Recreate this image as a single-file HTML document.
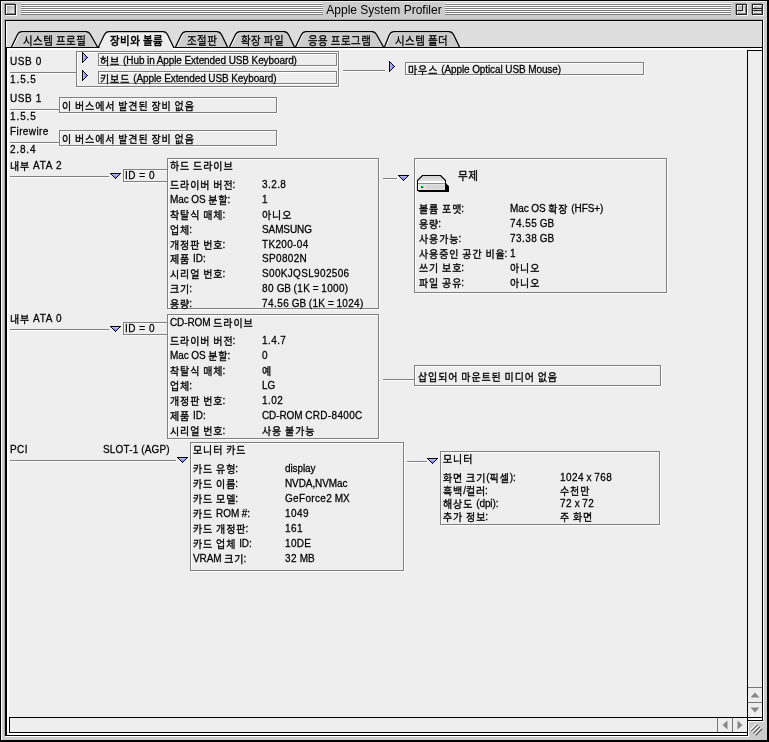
<!DOCTYPE html>
<html lang="ko"><head><meta charset="utf-8"><title>Apple System Profiler</title>
<style>
html,body{margin:0;padding:0;background:#ccc;overflow:hidden}
#w{position:relative;width:769px;height:742px;overflow:hidden;background:#ccc}
.l{position:absolute;display:block}
.t{position:absolute;font:10px/14px "Liberation Sans","Noto Sans CJK KR",sans-serif;white-space:pre;letter-spacing:-.1px;color:#000;transform:scale(1,1.1);transform-origin:0 50%;will-change:transform;-webkit-text-stroke:0.25px #000}
.c{margin-left:-1px}
.k{display:inline-block;transform:scaleY(.91);transform-origin:50% 70%;font-size:10px;letter-spacing:.9px;word-spacing:-.8px;font-weight:400;position:relative;top:1px;-webkit-text-stroke:0.3px #000}
.d{letter-spacing:.42px}
.d2{letter-spacing:.33px}
.tab .k{font-weight:400;-webkit-text-stroke:.25px #000;transform:none;font-size:10.5px;letter-spacing:.45px;top:.6px}
.big .k{transform:scaleY(1.02);font-size:10.6px;letter-spacing:.6px}
.act .k{font-weight:500;-webkit-text-stroke:0.3px #000}
.b{position:absolute;box-sizing:border-box;border:1px solid #808080;background:#eee;box-shadow:1px 1px 0 #fff,inset 1px 1px 0 #fff}
.title{position:absolute;will-change:transform;font:12px/16px "Liberation Sans",sans-serif;text-align:center;color:#000;white-space:nowrap}
.stripes{background:repeating-linear-gradient(to bottom,#fff 0,#fff 1px,#7c7c7c 1px,#7c7c7c 2px)}
.wbox{width:11px;height:11px;box-sizing:border-box;border:1px solid #222;box-shadow:-1px -1px 0 #999,1px 1px 0 #fff;background:linear-gradient(135deg,#999 0%,#ccc 50%,#fff 100%)}
.wbox i{position:absolute;left:0;top:0;width:9px;height:9px;box-sizing:border-box;border-left:1px solid #fff;border-top:1px solid #fff;border-right:1px solid #888;border-bottom:1px solid #888}
.wbox b{position:absolute;box-sizing:border-box}
</style></head><body><div id="w">
<div class="l" style="left:0px;top:0px;width:769px;height:742px;background:#ccc"></div>
<div class="l" style="left:0px;top:0px;width:769px;height:1px;background:#000"></div>
<div class="l" style="left:0px;top:0px;width:1px;height:742px;background:#000"></div>
<div class="l" style="left:767px;top:0px;width:2px;height:742px;background:#000"></div>
<div class="l" style="left:0px;top:740px;width:769px;height:2px;background:#000"></div>
<div class="l" style="left:1px;top:1px;width:766px;height:1px;background:#ececec"></div>
<div class="l" style="left:1px;top:1px;width:1px;height:739px;background:#fff"></div>
<div class="l stripes" style="left:21px;top:3px;width:302px;height:12px"></div>
<div class="l stripes" style="left:445px;top:3px;width:286px;height:12px"></div>
<div class="l wbox" style="left:5px;top:4px"><i></i></div>
<div class="l wbox" style="left:736px;top:4px"><i></i><b style="left:0;top:0;width:6px;height:6px;border-right:1px solid #222;border-bottom:1px solid #222"></b></div>
<div class="l wbox" style="left:752px;top:4px"><i></i><b style="left:0;top:3px;width:9px;height:3px;border-top:1px solid #222;border-bottom:1px solid #222"></b></div>
<div class="title" style="left:318.5px;top:2px;width:130px">Apple System Profiler</div>
<div class="l" style="left:4px;top:19px;width:759px;height:717px;background:#aaa"></div>
<div class="l" style="left:5px;top:20px;width:758px;height:716px;background:#000"></div>
<div class="l" style="left:6px;top:21px;width:756px;height:26px;background:#ddd"></div>
<div class="l" style="left:6px;top:21px;width:756px;height:1px;background:#e8e8e8"></div>
<div class="l" style="left:6px;top:21px;width:1px;height:26px;background:#fff"></div>
<div class="l" style="left:763px;top:20px;width:1px;height:701px;background:#fff"></div>
<div class="l" style="left:7px;top:48px;width:755px;height:687px;background:#fff"></div>
<div class="l" style="left:9px;top:50px;width:753px;height:685px;background:#eee"></div>
<div class="l" style="left:7px;top:733px;width:755px;height:2px;background:#fff"></div>
<div class="l" style="left:748px;top:721px;width:19px;height:19px;background:#ccc"></div>
<div class="l" style="left:763px;top:720px;width:4px;height:1px;background:#ccc"></div>
<div class="l" style="left:748px;top:721px;width:16px;height:1px;background:#fff"></div>
<div class="l" style="left:748px;top:721px;width:1px;height:16px;background:#fff"></div>
<div class="l" style="left:5px;top:736px;width:743px;height:1px;background:#fff"></div>
<div class="l" style="left:5px;top:737px;width:743px;height:3px;background:#ccc"></div>
<svg class="l" style="left:748px;top:721px" width="19" height="19" viewBox="0 0 19 19"><path d="M2.3 9.2 L8.8 2.7 M4.4 11.3 L10.9 4.8 M6.7 13.4 L13.2 6.9" stroke="#fff" stroke-width="1.3" fill="none"/><path d="M3.2 10.1 L9.7 3.6 M5.3 12.2 L11.8 5.7 M7.6 14.3 L14.1 7.8" stroke="#606060" stroke-width="1.3" fill="none"/></svg>
<div class="l" style="left:747px;top:50px;width:16px;height:668px;background:#000"></div>
<div class="l" style="left:748px;top:51px;width:14px;height:666px;background:#eee"></div>
<div class="l" style="left:748px;top:687px;width:14px;height:1px;background:#777"></div>
<div class="l" style="left:748px;top:702px;width:14px;height:1px;background:#777"></div>
<div class="l" style="left:748px;top:718px;width:14px;height:2px;background:#fff"></div>
<div class="l" style="left:747px;top:720px;width:16px;height:1px;background:#000"></div>
<div class="l" style="left:747px;top:717px;width:1px;height:19px;background:#000"></div>
<svg class="l" style="left:750px;top:692px" width="10" height="6" viewBox="0 0 10 6"><path d="M0.5 5.5 L5 0.5 L9.5 5.5 Z" fill="#888"/></svg>
<svg class="l" style="left:750px;top:707px" width="10" height="6" viewBox="0 0 10 6"><path d="M0.5 0.5 L5 5.5 L9.5 0.5 Z" fill="#888"/></svg>
<div class="l" style="left:9px;top:717px;width:739px;height:16px;background:#000"></div>
<div class="l" style="left:10px;top:718px;width:737px;height:14px;background:#eee"></div>
<div class="l" style="left:717px;top:718px;width:1px;height:14px;background:#777"></div>
<div class="l" style="left:732px;top:718px;width:1px;height:14px;background:#777"></div>
<svg class="l" style="left:722px;top:720px" width="6" height="10" viewBox="0 0 6 10"><path d="M5.5 0.5 L0.5 5 L5.5 9.5 Z" fill="#888"/></svg>
<svg class="l" style="left:737px;top:720px" width="6" height="10" viewBox="0 0 6 10"><path d="M0.5 0.5 L5.5 5 L0.5 9.5 Z" fill="#888"/></svg>
<div class="l" style="left:5px;top:47px;width:758px;height:1px;background:#000"></div>
<svg class="l" style="left:0;top:28px" width="480" height="22" viewBox="0 28 480 22"><path d="M11.5 47 L17.5 34.5 Q19 31.5 22 31.5 L86 31.5 Q89 31.5 90.5 34.5 L97.5 47 Z" fill="#ccc" stroke="none"/><path d="M12.7 47 L18.7 34.9 Q19.8 32.5 22.4 32.5 L86 32.5" fill="none" stroke="#fff" stroke-width="1"/><path d="M11.5 47 L17.5 34.5 Q19 31.5 22 31.5 L86 31.5 Q89 31.5 90.5 34.5 L97.5 47" fill="none" stroke="#000" stroke-width="1.25"/><path d="M98.5 47 L104.5 34.5 Q106 31.5 109 31.5 L163 31.5 Q166 31.5 167.5 34.5 L173.5 47 Z" fill="#eee" stroke="none"/><path d="M99.7 47 L105.7 34.9 Q106.8 32.5 109.4 32.5 L163 32.5" fill="none" stroke="#fff" stroke-width="1"/><path d="M98.5 47 L104.5 34.5 Q106 31.5 109 31.5 L163 31.5 Q166 31.5 167.5 34.5 L173.5 47" fill="none" stroke="#000" stroke-width="1.25"/><rect x="99.5" y="47" width="73.5" height="3" fill="#eee"/><path d="M175.5 47 L181.5 34.5 Q183 31.5 186 31.5 L217 31.5 Q220 31.5 221.5 34.5 L227.5 47 Z" fill="#ccc" stroke="none"/><path d="M176.7 47 L182.7 34.9 Q183.8 32.5 186.4 32.5 L217 32.5" fill="none" stroke="#fff" stroke-width="1"/><path d="M175.5 47 L181.5 34.5 Q183 31.5 186 31.5 L217 31.5 Q220 31.5 221.5 34.5 L227.5 47" fill="none" stroke="#000" stroke-width="1.25"/><path d="M229.5 47 L235.5 34.5 Q237 31.5 240 31.5 L284 31.5 Q287 31.5 288.5 34.5 L294.5 47 Z" fill="#ccc" stroke="none"/><path d="M230.7 47 L236.7 34.9 Q237.8 32.5 240.4 32.5 L284 32.5" fill="none" stroke="#fff" stroke-width="1"/><path d="M229.5 47 L235.5 34.5 Q237 31.5 240 31.5 L284 31.5 Q287 31.5 288.5 34.5 L294.5 47" fill="none" stroke="#000" stroke-width="1.25"/><path d="M295.5 47 L301.5 34.5 Q303 31.5 306 31.5 L372 31.5 Q375 31.5 376.5 34.5 L383.5 47 Z" fill="#ccc" stroke="none"/><path d="M296.7 47 L302.7 34.9 Q303.8 32.5 306.4 32.5 L372 32.5" fill="none" stroke="#fff" stroke-width="1"/><path d="M295.5 47 L301.5 34.5 Q303 31.5 306 31.5 L372 31.5 Q375 31.5 376.5 34.5 L383.5 47" fill="none" stroke="#000" stroke-width="1.25"/><path d="M384.5 47 L389.5 34.5 Q391 31.5 394 31.5 L449 31.5 Q452 31.5 453.5 34.5 L459.5 47 Z" fill="#ccc" stroke="none"/><path d="M385.7 47 L390.7 34.9 Q391.8 32.5 394.4 32.5 L449 32.5" fill="none" stroke="#fff" stroke-width="1"/><path d="M384.5 47 L389.5 34.5 Q391 31.5 394 31.5 L449 31.5 Q452 31.5 453.5 34.5 L459.5 47" fill="none" stroke="#000" stroke-width="1.25"/></svg>
<div class="t tab" style="left:23px;top:33px"><span class="k">시스템 </span><span class="k">프로필</span></div>
<div class="t tab act" style="left:110px;top:33px"><span class="k">장비와 </span><span class="k">볼륨</span></div>
<div class="t tab" style="left:187px;top:33px"><span class="k">조절판</span></div>
<div class="t tab" style="left:241px;top:33px"><span class="k">확장 </span><span class="k">파일</span></div>
<div class="t tab" style="left:308px;top:33px"><span class="k">응용 </span><span class="k">프로그램</span></div>
<div class="t tab" style="left:395px;top:33px"><span class="k">시스템 </span><span class="k">폴더</span></div>
<div class="t " style="left:10px;top:54.5px;letter-spacing:0.6px">USB 0</div>
<div class="l" style="left:10px;top:72px;width:66px;height:1px;background:#808080;box-shadow:0 1px 0 #fff"></div>
<div class="t " style="left:10px;top:72.5px;letter-spacing:0.9px">1.5.5</div>
<div class="t " style="left:10px;top:91.5px;letter-spacing:0.6px">USB 1</div>
<div class="l" style="left:10px;top:109px;width:49px;height:1px;background:#808080;box-shadow:0 1px 0 #fff"></div>
<div class="t " style="left:10px;top:109.5px;letter-spacing:0.9px">1.5.5</div>
<div class="t " style="left:10px;top:124.5px;letter-spacing:0.4px">Firewire</div>
<div class="l" style="left:10px;top:142px;width:49px;height:1px;background:#808080;box-shadow:0 1px 0 #fff"></div>
<div class="t " style="left:10px;top:142.5px;letter-spacing:0.8px">2.8.4</div>
<div class="t " style="left:10px;top:158.5px;letter-spacing:0.7px"><span class="k">내부 </span>ATA 2</div>
<div class="l" style="left:10px;top:176px;width:99px;height:1px;background:#808080;box-shadow:0 1px 0 #fff"></div>
<div class="t " style="left:10px;top:311.5px;letter-spacing:0.7px"><span class="k">내부 </span>ATA 0</div>
<div class="l" style="left:10px;top:329px;width:99px;height:1px;background:#808080;box-shadow:0 1px 0 #fff"></div>
<div class="t " style="left:10px;top:442.5px;letter-spacing:0.4px">PCI</div>
<div class="t " style="left:103px;top:442.5px;letter-spacing:0.15px">SLOT-1 (AGP)</div>
<div class="l" style="left:10px;top:460px;width:166px;height:1px;background:#808080;box-shadow:0 1px 0 #fff"></div>
<div class="b " style="left:76px;top:51px;width:263px;height:36px"></div>
<svg class="l" style="left:82px;top:52px" width="6" height="11" viewBox="0 0 6 11" shape-rendering="crispEdges"><rect x="0" y="0" width="1" height="11" fill="#000"/><rect x="1" y="1" width="1" height="1" fill="#000"/><rect x="1" y="9" width="1" height="1" fill="#000"/><rect x="1" y="2" width="1" height="7" fill="#b4b4ff"/><rect x="2" y="2" width="1" height="1" fill="#000"/><rect x="2" y="8" width="1" height="1" fill="#000"/><rect x="2" y="3" width="1" height="5" fill="#a0a0ff"/><rect x="3" y="3" width="1" height="1" fill="#000"/><rect x="3" y="7" width="1" height="1" fill="#000"/><rect x="3" y="4" width="1" height="3" fill="#8c8cf0"/><rect x="4" y="4" width="1" height="1" fill="#000"/><rect x="4" y="6" width="1" height="1" fill="#000"/><rect x="4" y="5" width="1" height="1" fill="#7c7ce4"/><rect x="5" y="5" width="1" height="1" fill="#000"/></svg>
<svg class="l" style="left:82px;top:70px" width="6" height="11" viewBox="0 0 6 11" shape-rendering="crispEdges"><rect x="0" y="0" width="1" height="11" fill="#000"/><rect x="1" y="1" width="1" height="1" fill="#000"/><rect x="1" y="9" width="1" height="1" fill="#000"/><rect x="1" y="2" width="1" height="7" fill="#b4b4ff"/><rect x="2" y="2" width="1" height="1" fill="#000"/><rect x="2" y="8" width="1" height="1" fill="#000"/><rect x="2" y="3" width="1" height="5" fill="#a0a0ff"/><rect x="3" y="3" width="1" height="1" fill="#000"/><rect x="3" y="7" width="1" height="1" fill="#000"/><rect x="3" y="4" width="1" height="3" fill="#8c8cf0"/><rect x="4" y="4" width="1" height="1" fill="#000"/><rect x="4" y="6" width="1" height="1" fill="#000"/><rect x="4" y="5" width="1" height="1" fill="#7c7ce4"/><rect x="5" y="5" width="1" height="1" fill="#000"/></svg>
<div class="b " style="left:98px;top:53px;width:239px;height:13px"></div>
<div class="b " style="left:98px;top:71px;width:239px;height:13px"></div>
<div class="t " style="left:100.2px;top:53.8px"><span class="k">허브 </span>(Hub in Apple Extended USB Keyboard)</div>
<div class="t " style="left:100.2px;top:71.8px"><span class="k">키보드 </span>(Apple Extended USB Keyboard)</div>
<div class="l" style="left:343px;top:70px;width:42px;height:1px;background:#808080;box-shadow:0 1px 0 #fff"></div>
<svg class="l" style="left:389px;top:61px" width="6" height="11" viewBox="0 0 6 11" shape-rendering="crispEdges"><rect x="0" y="0" width="1" height="11" fill="#000"/><rect x="1" y="1" width="1" height="1" fill="#000"/><rect x="1" y="9" width="1" height="1" fill="#000"/><rect x="1" y="2" width="1" height="7" fill="#b4b4ff"/><rect x="2" y="2" width="1" height="1" fill="#000"/><rect x="2" y="8" width="1" height="1" fill="#000"/><rect x="2" y="3" width="1" height="5" fill="#a0a0ff"/><rect x="3" y="3" width="1" height="1" fill="#000"/><rect x="3" y="7" width="1" height="1" fill="#000"/><rect x="3" y="4" width="1" height="3" fill="#8c8cf0"/><rect x="4" y="4" width="1" height="1" fill="#000"/><rect x="4" y="6" width="1" height="1" fill="#000"/><rect x="4" y="5" width="1" height="1" fill="#7c7ce4"/><rect x="5" y="5" width="1" height="1" fill="#000"/></svg>
<div class="b " style="left:405px;top:62px;width:239px;height:13px"></div>
<div class="t " style="left:408px;top:62.8px"><span class="k">마우스 </span>(Apple Optical USB Mouse)</div>
<div class="b " style="left:59px;top:97px;width:218px;height:16px"></div>
<div class="t " style="left:62px;top:99px"><span class="k">이 </span><span class="k">버스에서 </span><span class="k">발견된 </span><span class="k">장비 </span><span class="k">없음</span></div>
<div class="b " style="left:59px;top:130px;width:218px;height:16px"></div>
<div class="t " style="left:62px;top:132px"><span class="k">이 </span><span class="k">버스에서 </span><span class="k">발견된 </span><span class="k">장비 </span><span class="k">없음</span></div>
<svg class="l" style="left:110px;top:173px" width="11" height="6" viewBox="0 0 11 6" shape-rendering="crispEdges"><rect x="0" y="0" width="11" height="1" fill="#000"/><rect x="1" y="1" width="1" height="1" fill="#000"/><rect x="9" y="1" width="1" height="1" fill="#000"/><rect x="2" y="1" width="7" height="1" fill="#b4b4ff"/><rect x="2" y="2" width="1" height="1" fill="#000"/><rect x="8" y="2" width="1" height="1" fill="#000"/><rect x="3" y="2" width="5" height="1" fill="#a0a0ff"/><rect x="3" y="3" width="1" height="1" fill="#000"/><rect x="7" y="3" width="1" height="1" fill="#000"/><rect x="4" y="3" width="3" height="1" fill="#8c8cf0"/><rect x="4" y="4" width="1" height="1" fill="#000"/><rect x="6" y="4" width="1" height="1" fill="#000"/><rect x="5" y="4" width="1" height="1" fill="#7c7ce4"/><rect x="5" y="5" width="1" height="1" fill="#000"/></svg>
<div class="b " style="left:123px;top:169px;width:45px;height:13px"></div>
<div class="t " style="left:125px;top:168.5px;letter-spacing:0.5px">ID = 0</div>
<div class="b " style="left:167px;top:158px;width:212px;height:151px"></div>
<div class="t " style="left:170px;top:159px"><span class="k">하드 </span><span class="k">드라이브</span></div>
<div class="t " style="left:170px;top:177.9px"><span class="k">드라이버 </span><span class="k">버전</span><span class="c">:</span></div>
<div class="t " style="left:262px;top:177.9px"><span class="d">3.2.8</span></div>
<div class="t " style="left:170px;top:192.8px">Mac OS <span class="k">분할</span><span class="c">:</span></div>
<div class="t " style="left:262px;top:192.8px"><span class="d">1</span></div>
<div class="t " style="left:170px;top:207.7px"><span class="k">착탈식 </span><span class="k">매체</span><span class="c">:</span></div>
<div class="t " style="left:262px;top:207.7px"><span class="k">아니오</span></div>
<div class="t " style="left:170px;top:222.6px"><span class="k">업체</span><span class="c">:</span></div>
<div class="t " style="left:262px;top:222.6px">SAMSUNG</div>
<div class="t " style="left:170px;top:237.5px"><span class="k">개정판 </span><span class="k">번호</span><span class="c">:</span></div>
<div class="t " style="left:262px;top:237.5px"><span class="d2">TK200-04</span></div>
<div class="t " style="left:170px;top:252.4px"><span class="k">제품 </span>ID:</div>
<div class="t " style="left:262px;top:252.4px"><span class="d2">SP0802N</span></div>
<div class="t " style="left:170px;top:267.3px"><span class="k">시리얼 </span><span class="k">번호</span><span class="c">:</span></div>
<div class="t " style="left:262px;top:267.3px"><span class="d2">S00KJQSL902506</span></div>
<div class="t " style="left:170px;top:282.2px"><span class="k">크기</span><span class="c">:</span></div>
<div class="t " style="left:262px;top:282.2px"><span class="d">80</span> GB <span class="d2">(1K</span> = <span class="d2">1000)</span></div>
<div class="t " style="left:170px;top:297.1px"><span class="k">용량</span><span class="c">:</span></div>
<div class="t " style="left:262px;top:297.1px"><span class="d">74.56</span> GB <span class="d2">(1K</span> = <span class="d2">1024)</span></div>
<div class="l" style="left:383px;top:178px;width:14px;height:1px;background:#808080;box-shadow:0 1px 0 #fff"></div>
<svg class="l" style="left:398px;top:175px" width="11" height="6" viewBox="0 0 11 6" shape-rendering="crispEdges"><rect x="0" y="0" width="11" height="1" fill="#000"/><rect x="1" y="1" width="1" height="1" fill="#000"/><rect x="9" y="1" width="1" height="1" fill="#000"/><rect x="2" y="1" width="7" height="1" fill="#b4b4ff"/><rect x="2" y="2" width="1" height="1" fill="#000"/><rect x="8" y="2" width="1" height="1" fill="#000"/><rect x="3" y="2" width="5" height="1" fill="#a0a0ff"/><rect x="3" y="3" width="1" height="1" fill="#000"/><rect x="7" y="3" width="1" height="1" fill="#000"/><rect x="4" y="3" width="3" height="1" fill="#8c8cf0"/><rect x="4" y="4" width="1" height="1" fill="#000"/><rect x="6" y="4" width="1" height="1" fill="#000"/><rect x="5" y="4" width="1" height="1" fill="#7c7ce4"/><rect x="5" y="5" width="1" height="1" fill="#000"/></svg>
<div class="b " style="left:414px;top:158px;width:253px;height:135px"></div>
<div class="t big" style="left:458px;top:167.7px"><span class="k">무제</span></div>
<div class="t " style="left:418.5px;top:202px"><span class="k">볼륨 </span><span class="k">포맷</span><span class="c">:</span></div>
<div class="t " style="left:510px;top:202px">Mac OS <span class="k">확장 </span>(HFS+)</div>
<div class="t " style="left:418.5px;top:216.85px"><span class="k">용량</span><span class="c">:</span></div>
<div class="t " style="left:510px;top:216.85px"><span class="d">74.55</span> GB</div>
<div class="t " style="left:418.5px;top:231.7px"><span class="k">사용가능</span><span class="c">:</span></div>
<div class="t " style="left:510px;top:231.7px"><span class="d">73.38</span> GB</div>
<div class="t " style="left:418.5px;top:246.55px"><span class="k">사용중인 </span><span class="k">공간 </span><span class="k">비율</span><span class="c">:</span></div>
<div class="t " style="left:510px;top:246.55px"><span class="d">1</span></div>
<div class="t " style="left:418.5px;top:261.4px"><span class="k">쓰기 </span><span class="k">보호</span><span class="c">:</span></div>
<div class="t " style="left:510px;top:261.4px"><span class="k">아니오</span></div>
<div class="t " style="left:418.5px;top:276.25px"><span class="k">파일 </span><span class="k">공유</span><span class="c">:</span></div>
<div class="t " style="left:510px;top:276.25px"><span class="k">아니오</span></div>
<svg class="l" style="left:416px;top:174px" width="34" height="19" viewBox="416 174 34 19">
<defs><linearGradient id="hdg" x1="0" y1="0" x2="0" y2="1"><stop offset="0" stop-color="#d4d4d4"/><stop offset="1" stop-color="#f2f2f2"/></linearGradient></defs>
<path d="M419 190 H449 V186.2 L446 183.3 V190 Z" fill="#000"/>
<rect x="418.5" y="190" width="30.5" height="2" fill="#000"/>
<path d="M417.5 180.5 L422.5 175.5 H440.5 L445.5 180.5 V190.5 H417.5 Z" fill="url(#hdg)" stroke="#000" stroke-width="1.1" stroke-linejoin="round"/>
<rect x="418.2" y="181" width="26.6" height="2" fill="#fff"/>
<rect x="418.2" y="183" width="26.6" height="1" fill="#8a8a8a"/>
<rect x="418.2" y="184" width="26.6" height="5.8" fill="#e2e2e2"/>
<rect x="426" y="185" width="18" height="4" fill="#d6d6d6"/>
<rect x="418.2" y="184" width="1" height="5.8" fill="#f8f8f8"/>
<rect x="421" y="186" width="2" height="1" fill="#0b0"/><rect x="421" y="187" width="2" height="1" fill="#e00"/>
</svg>
<svg class="l" style="left:110px;top:326px" width="11" height="6" viewBox="0 0 11 6" shape-rendering="crispEdges"><rect x="0" y="0" width="11" height="1" fill="#000"/><rect x="1" y="1" width="1" height="1" fill="#000"/><rect x="9" y="1" width="1" height="1" fill="#000"/><rect x="2" y="1" width="7" height="1" fill="#b4b4ff"/><rect x="2" y="2" width="1" height="1" fill="#000"/><rect x="8" y="2" width="1" height="1" fill="#000"/><rect x="3" y="2" width="5" height="1" fill="#a0a0ff"/><rect x="3" y="3" width="1" height="1" fill="#000"/><rect x="7" y="3" width="1" height="1" fill="#000"/><rect x="4" y="3" width="3" height="1" fill="#8c8cf0"/><rect x="4" y="4" width="1" height="1" fill="#000"/><rect x="6" y="4" width="1" height="1" fill="#000"/><rect x="5" y="4" width="1" height="1" fill="#7c7ce4"/><rect x="5" y="5" width="1" height="1" fill="#000"/></svg>
<div class="b " style="left:123px;top:322px;width:45px;height:13px"></div>
<div class="t " style="left:125px;top:321.5px;letter-spacing:0.5px">ID = 0</div>
<div class="b " style="left:167px;top:314px;width:212px;height:125px"></div>
<div class="t " style="left:170px;top:315.9px">CD-ROM <span class="k">드라이브</span></div>
<div class="t " style="left:170px;top:333.9px"><span class="k">드라이버 </span><span class="k">버전</span><span class="c">:</span></div>
<div class="t " style="left:262px;top:333.9px"><span class="d">1.4.7</span></div>
<div class="t " style="left:170px;top:348.9px">Mac OS <span class="k">분할</span><span class="c">:</span></div>
<div class="t " style="left:262px;top:348.9px"><span class="d">0</span></div>
<div class="t " style="left:170px;top:363.9px"><span class="k">착탈식 </span><span class="k">매체</span><span class="c">:</span></div>
<div class="t " style="left:262px;top:363.9px"><span class="k">예</span></div>
<div class="t " style="left:170px;top:378.9px"><span class="k">업체</span><span class="c">:</span></div>
<div class="t " style="left:262px;top:378.9px">LG</div>
<div class="t " style="left:170px;top:393.9px"><span class="k">개정판 </span><span class="k">번호</span><span class="c">:</span></div>
<div class="t " style="left:262px;top:393.9px"><span class="d">1.02</span></div>
<div class="t " style="left:170px;top:408.9px"><span class="k">제품 </span>ID:</div>
<div class="t " style="left:262px;top:408.9px">CD-ROM <span class="d2">CRD-8400C</span></div>
<div class="t " style="left:170px;top:423.9px"><span class="k">시리얼 </span><span class="k">번호</span><span class="c">:</span></div>
<div class="t " style="left:262px;top:423.9px"><span class="k">사용 </span><span class="k">불가능</span></div>
<div class="l" style="left:383px;top:379px;width:31px;height:1px;background:#808080;box-shadow:0 1px 0 #fff"></div>
<div class="b " style="left:414px;top:365px;width:247px;height:21px"></div>
<div class="t " style="left:418px;top:369.5px"><span class="k">삽입되어 </span><span class="k">마운트된 </span><span class="k">미디어 </span><span class="k">없음</span></div>
<svg class="l" style="left:177px;top:457px" width="11" height="6" viewBox="0 0 11 6" shape-rendering="crispEdges"><rect x="0" y="0" width="11" height="1" fill="#000"/><rect x="1" y="1" width="1" height="1" fill="#000"/><rect x="9" y="1" width="1" height="1" fill="#000"/><rect x="2" y="1" width="7" height="1" fill="#b4b4ff"/><rect x="2" y="2" width="1" height="1" fill="#000"/><rect x="8" y="2" width="1" height="1" fill="#000"/><rect x="3" y="2" width="5" height="1" fill="#a0a0ff"/><rect x="3" y="3" width="1" height="1" fill="#000"/><rect x="7" y="3" width="1" height="1" fill="#000"/><rect x="4" y="3" width="3" height="1" fill="#8c8cf0"/><rect x="4" y="4" width="1" height="1" fill="#000"/><rect x="6" y="4" width="1" height="1" fill="#000"/><rect x="5" y="4" width="1" height="1" fill="#7c7ce4"/><rect x="5" y="5" width="1" height="1" fill="#000"/></svg>
<div class="b " style="left:190px;top:442px;width:214px;height:129px"></div>
<div class="t " style="left:193px;top:442.7px"><span class="k">모니터 </span><span class="k">카드</span></div>
<div class="t " style="left:193px;top:461.5px"><span class="k">카드 </span><span class="k">유형</span><span class="c">:</span></div>
<div class="t " style="left:285px;top:461.5px">display</div>
<div class="t " style="left:193px;top:476.52px"><span class="k">카드 </span><span class="k">이름</span><span class="c">:</span></div>
<div class="t " style="left:285px;top:476.52px">NVDA,NVMac</div>
<div class="t " style="left:193px;top:491.54px"><span class="k">카드 </span><span class="k">모델</span><span class="c">:</span></div>
<div class="t " style="left:285px;top:491.54px"><span class="d2">GeForce2</span> MX</div>
<div class="t " style="left:193px;top:506.56px"><span class="k">카드 </span>ROM #:</div>
<div class="t " style="left:285px;top:506.56px"><span class="d">1049</span></div>
<div class="t " style="left:193px;top:521.58px"><span class="k">카드 </span><span class="k">개정판</span><span class="c">:</span></div>
<div class="t " style="left:285px;top:521.58px"><span class="d">161</span></div>
<div class="t " style="left:193px;top:536.6px"><span class="k">카드 </span><span class="k">업체 </span>ID:</div>
<div class="t " style="left:285px;top:536.6px"><span class="d2">10DE</span></div>
<div class="t " style="left:193px;top:551.62px">VRAM <span class="k">크기</span><span class="c">:</span></div>
<div class="t " style="left:285px;top:551.62px"><span class="d">32</span> MB</div>
<div class="l" style="left:407px;top:461px;width:20px;height:1px;background:#808080;box-shadow:0 1px 0 #fff"></div>
<svg class="l" style="left:427px;top:458px" width="11" height="6" viewBox="0 0 11 6" shape-rendering="crispEdges"><rect x="0" y="0" width="11" height="1" fill="#000"/><rect x="1" y="1" width="1" height="1" fill="#000"/><rect x="9" y="1" width="1" height="1" fill="#000"/><rect x="2" y="1" width="7" height="1" fill="#b4b4ff"/><rect x="2" y="2" width="1" height="1" fill="#000"/><rect x="8" y="2" width="1" height="1" fill="#000"/><rect x="3" y="2" width="5" height="1" fill="#a0a0ff"/><rect x="3" y="3" width="1" height="1" fill="#000"/><rect x="7" y="3" width="1" height="1" fill="#000"/><rect x="4" y="3" width="3" height="1" fill="#8c8cf0"/><rect x="4" y="4" width="1" height="1" fill="#000"/><rect x="6" y="4" width="1" height="1" fill="#000"/><rect x="5" y="4" width="1" height="1" fill="#7c7ce4"/><rect x="5" y="5" width="1" height="1" fill="#000"/></svg>
<div class="b " style="left:440px;top:451px;width:220px;height:74px"></div>
<div class="t " style="left:443px;top:451.9px"><span class="k">모니터</span></div>
<div class="t " style="left:443px;top:470.8px"><span class="k">화면 </span><span class="k">크기</span>(<span class="k">픽셀</span>):</div>
<div class="t " style="left:560px;top:470.8px"><span class="d">1024</span> x <span class="d">768</span></div>
<div class="t " style="left:443px;top:483.9px"><span class="k">흑백</span>/<span class="k">컬러</span><span class="c">:</span></div>
<div class="t " style="left:560px;top:483.9px"><span class="k">수천만</span></div>
<div class="t " style="left:443px;top:497px"><span class="k">해상도 </span>(dpi):</div>
<div class="t " style="left:560px;top:497px"><span class="d">72</span> x <span class="d">72</span></div>
<div class="t " style="left:443px;top:510.1px"><span class="k">추가 </span><span class="k">정보</span><span class="c">:</span></div>
<div class="t " style="left:560px;top:510.1px"><span class="k">주 </span><span class="k">화면</span></div>
</div></body></html>
